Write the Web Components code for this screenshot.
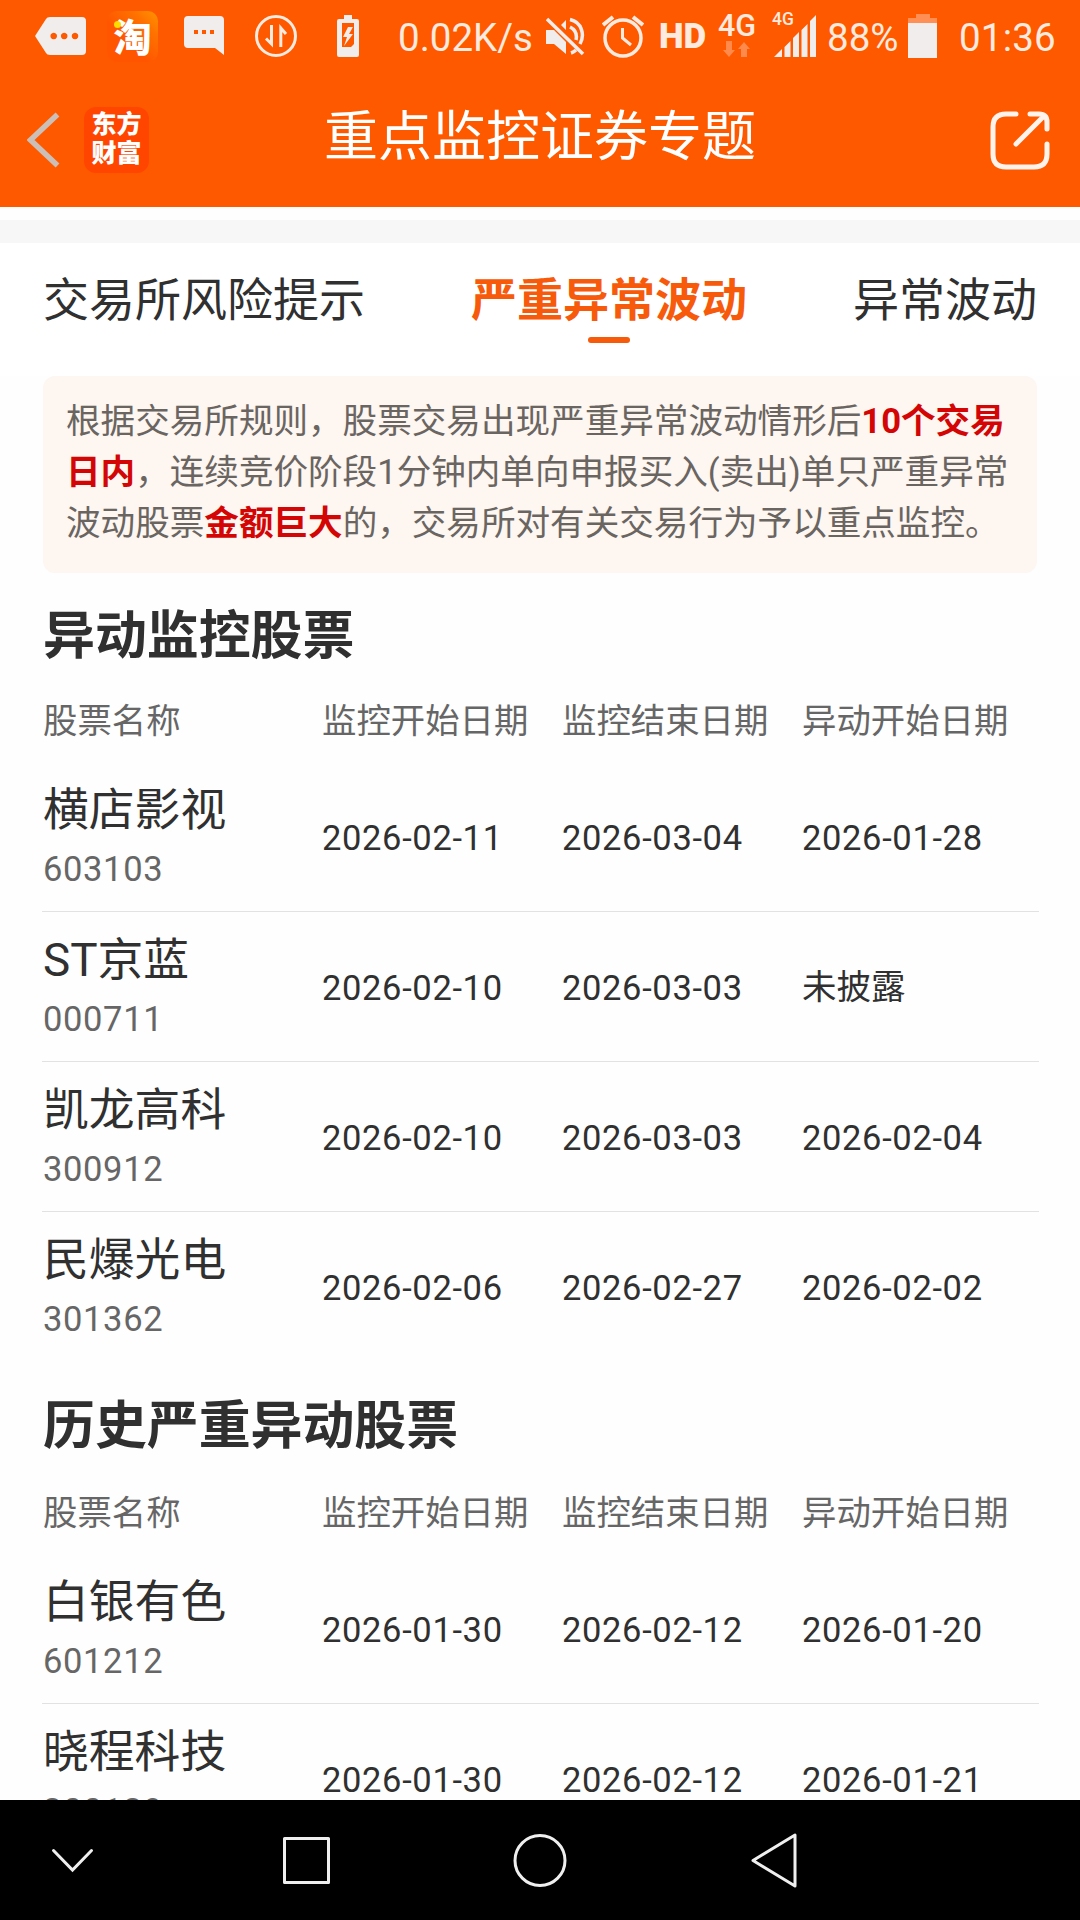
<!DOCTYPE html>
<html lang="zh-CN">
<head>
<meta charset="UTF-8">
<title>重点监控证券专题</title>
<style>
    html, body {
        margin: 0;
        height: 100%;
        background: #fefefe;
        font-family: Roboto, "Noto Sans CJK SC", sans-serif;
        color: #303030;
    }
</style>
</head>
<body>
<monitor-app></monitor-app>

<script>
// Base class: renders template() into an open shadow root
class BaseElement extends HTMLElement {
    connectedCallback() {
        if (!this.shadowRoot) {
            this.attachShadow({ mode: 'open' });
        }
        this.shadowRoot.innerHTML = this.template();
    }
}

// Component: StatusBar
class StatusBar extends BaseElement {
    template() {
        return `
            <style>
                :host {
                    display: flex;
                    height: 72px;
                    box-sizing: border-box;
                    padding: 0 0 0 35px;
                    color: #ffeadf;
                    font-size: 38.5px;
                    line-height: 75px;
                    white-space: nowrap;
                }
                svg, span, .tao, .net { flex: none; }
                svg { display: block; fill: #f1edec; }
                .tao {
                    width: 51px;
                    height: 51px;
                    margin: 11px 0 0 21px;
                    border-radius: 10px;
                    background: linear-gradient(225deg, #ff9500 0%, #ff7200 25%, #ff5500 60%);
                    color: #fff;
                    font-size: 38px;
                    font-weight: 900;
                    line-height: 54px;
                    text-align: center;
                    position: relative;
                }
                .tao::after {
                    content: "";
                    position: absolute;
                    left: 7px;
                    top: 10px;
                    width: 7px;
                    height: 7px;
                    border-radius: 50%;
                    background: #ffdc00;
                }
                .speed { width: 149px; margin-left: 39px; }
                .hd { width: 43px; margin-left: 15px; font-size: 35px; font-weight: 900; line-height: 74px; }
                .net {
                    display: flex;
                    flex-direction: column;
                    width: 40px;
                    margin-left: 16px;
                    font-size: 30.5px;
                    font-weight: 500;
                    line-height: 30px;
                    padding-top: 11px;
                    box-sizing: border-box;
                }
                .net svg { margin-left: 3px; fill: #ff8a4c; }
                .signal { position: relative; width: 45px; margin-left: 14px; height: 72px; }
                .signal svg { margin: 15px 0 0 2px; }
                .signal small {
                    position: absolute;
                    left: 0;
                    top: 9px;
                    font-size: 17.5px;
                    font-weight: 500;
                    line-height: 20px;
                }
                .percent { width: 72px; margin-left: 10px; }
                .time { margin-left: 22px; letter-spacing: 0.2px; }
            </style>
            <svg width="51" height="72" viewBox="0 0 51 72">
                <path fill-rule="evenodd" d="M0 36 11 19q1-2 4-2H47q4 0 4 4V51q0 4-4 4H15q-3 0-4-2ZM18.7 32.700a3.300 3.300 0 1 0 .01 0ZM29.200 32.700a3.300 3.300 0 1 0 .01 0ZM40 32.700a3.300 3.300 0 1 0 .01 0Z"/>
            </svg>
            <div class="tao">淘</div>
            <svg style="margin-left:26px" width="40" height="72" viewBox="0 0 40 72">
                <path fill-rule="evenodd" d="M4 16H36q4 0 4 4V55L31 48H4q-4 0-4-4V20q0-4 4-4ZM10 30v4h4v-4ZM18 30v4h4v-4ZM26 30v4h4v-4Z"/>
            </svg>
            <svg style="margin-left:31px;fill:none" width="42" height="72" viewBox="0 0 42 72" stroke="#ffeadf" stroke-width="3">
                <circle cx="21" cy="36" r="19.500"/>
                <path d="M16.500 25V44L11 38.500M25.800 47V28L31 34"/>
            </svg>
            <svg style="margin-left:40px" width="22" height="72" viewBox="0 0 22 72">
                <path fill-rule="evenodd" d="M7 15h8v4h5q2 0 2 2V55q0 2-2 2H2q-2 0-2-2V21q0-2 2-2h5ZM5 23V47h9l3-3V23Z"/>
                <path d="m11 27-5 10h4l-3 9 9-12h-4l4-7Z"/>
            </svg>
            <span class="speed">0.02K/s</span>
            <svg width="39" height="72" viewBox="0 0 39 72" style="margin-left:-1px">
                <path d="M0 30H8L20 42V54L8 44H0ZM15 25l5-5v10Z"/>
                <path fill="none" stroke="#f1edec" stroke-width="3.500" d="M1 19 37 54M24 19.500C36 22 39 35 34 44M24 27q8 4 6 13M25 53q3-1 5-3"/>
            </svg>
            <svg width="42" height="72" viewBox="0 0 42 72" style="margin-left:17px;fill:none" stroke="#ffeadf">
                <circle cx="21" cy="38" r="18" stroke-width="3.500"/>
                <path d="M20.500 28V38L29 45" stroke-width="3"/>
                <path d="M1 25 11 17M31 17 41 25" stroke-width="4"/>
            </svg>
            <span class="hd">HD</span>
            <div class="net">4G
                <svg width="38" height="16" viewBox="0 0 38 16">
                    <path d="M5 0h6v9h3l-6 7-6-7h3ZM20 16h6V8h3l-6-7-6 7h3Z"/>
                </svg>
            </div>
            <div class="signal">
                <svg width="43" height="42" viewBox="0 0 43 42">
                    <path d="M0 42 8 34V42ZM10.500 42V32l6-6V42ZM19 42V23l6-6V42ZM27.500 42V15l6-6V42ZM36 42V6l6-6V42Z"/>
                </svg>
                <small>4G</small>
            </div>
            <span class="percent">88%</span>
            <svg style="margin-left:9px" width="29" height="72" viewBox="0 0 29 72">
                <path fill="#ff8f55" d="M8 14H22v4h7v5H0v-5h8Z"/>
                <path d="M0 23H29V58H0Z"/>
            </svg>
            <span class="time">01:36</span>
        `;
    }
}

// Component: TitleBar
class TitleBar extends BaseElement {
    template() {
        return `
            <style>
                :host {
                    display: flex;
                    align-items: center;
                    height: 135px;
                    padding: 0 27px;
                    box-sizing: border-box;
                    color: #fff;
                }
                .side { flex: 1; display: flex; align-items: center; }
                .side.right { justify-content: flex-end; }
                h1 {
                    margin: 0;
                    font-size: 54px;
                    font-weight: 400;
                    line-height: 64px;
                    padding-bottom: 3px;
                }
                svg { display: block; fill: none; }
                .logo {
                    width: 65px;
                    height: 66px;
                    margin-left: 24px;
                    box-sizing: border-box;
                    padding-top: 3px;
                    border-radius: 12px;
                    background: #ff4500;
                    font-size: 25px;
                    font-weight: 900;
                    line-height: 29px;
                    text-align: center;
                }
            </style>
            <div class="side">
                <svg width="33" height="56" viewBox="0 0 33 56" stroke="#cbbfb7" stroke-width="5.500">
                    <path d="M30.500 2.500 3.500 28 30.500 53.500"/>
                </svg>
                <div class="logo">东方<br>财富</div>
            </div>
            <h1><slot></slot></h1>
            <div class="side right">
                <svg width="64" height="60" viewBox="0 0 64 60" stroke="#fff3ec" stroke-width="5" stroke-linecap="round" stroke-linejoin="round">
                    <path d="M27 4H17Q4 4 4 17V44Q4 57 17 57H45Q58 57 58 44V34M41 4H50Q58 4 58 12V19M27 34 55 6"/>
                </svg>
            </div>
        `;
    }
}

// Component: TabItem
class TabItem extends BaseElement {
    template() {
        return `
            <style>
                :host {
                    display: flex;
                    flex-direction: column;
                    align-items: center;
                    font-size: 46px;
                    line-height: 60px;
                    white-space: nowrap;
                }
                :host([active]) { color: #f65a0a; font-weight: 700; }
                i { display: none; width: 42px; height: 6px; margin-top: 7px; border-radius: 3px; background: #f65a0a; }
                :host([active]) i { display: block; }
            </style>
            <slot></slot><i></i>
        `;
    }
}

// Component: TabBar
class TabBar extends BaseElement {
    template() {
        return `
            <style>
                :host {
                    display: flex;
                    justify-content: space-between;
                    height: 133px;
                    padding: 27px 43px 0 43px;
                    box-sizing: border-box;
                    background: #fff;
                }
            </style>
            <slot></slot>
        `;
    }
}

// Component: NoticeBox
class NoticeBox extends BaseElement {
    template() {
        return `
            <style>
                :host {
                    display: block;
                    height: 197px;
                    margin: 0 43px;
                    padding: 20px 0 0 23px;
                    box-sizing: border-box;
                    border-radius: 12px;
                    background: #fdf6f1;
                    color: #6a6561;
                    font-size: 34.6px;
                    line-height: 51px;
                    white-space: nowrap;
                }
                ::slotted(b) { color: #d30505; }
            </style>
            <slot></slot>
        `;
    }
}

// Component: StockRow
class StockRow extends BaseElement {
    template() {
        const dates = this.getAttribute('dates').split(',');
        return `
            <style>
                :host {
                    display: grid;
                    grid-template-columns: 279px 240px 240px 1fr;
                    align-items: center;
                    height: 150px;
                    padding-left: 1px;
                    box-sizing: border-box;
                    border-bottom: 1px solid #e2e2e2;
                    font-size: 34.5px;
                    letter-spacing: 0.65px;
                }
                :host(:last-of-type) { border-bottom-color: transparent; }
                .name { font-size: 45.8px; line-height: 60px; letter-spacing: 0; }
                .code { color: #666; line-height: 56px; }
                .date { padding-top: 2px; line-height: 44px; }
                .date.text { letter-spacing: 0; padding-top: 0; }
                .stock { padding-top: 4px; }
            </style>
            <div class="stock">
                <div class="name"><slot></slot></div>
                <div class="code">${this.getAttribute('code')}</div>
            </div>
            ${dates.map(date => `<div class="date${/\d/.test(date) ? '' : ' text'}">${date}</div>`).join('')}
        `;
    }
}

// Component: StockTable
class StockTable extends BaseElement {
    template() {
        return `
            <style>
                :host { display: block; margin: 0 41px 0 42px; }
                h2 {
                    margin: 0;
                    padding-left: 1px;
                    font-size: 51.9px;
                    line-height: 70px;
                }
                .head {
                    display: grid;
                    grid-template-columns: 279px 240px 240px 1fr;
                    padding: var(--head-gap, 27px) 0 19px 1px;
                    color: #666;
                    font-size: 34.4px;
                    line-height: 44px;
                    white-space: nowrap;
                }
            </style>
            <h2>${this.getAttribute('heading')}</h2>
            <div class="head">
                <span>股票名称</span>
                <span>监控开始日期</span>
                <span>监控结束日期</span>
                <span>异动开始日期</span>
            </div>
            <slot></slot>
        `;
    }
}

// Component: NavBar
class NavBar extends BaseElement {
    template() {
        return `
            <style>
                :host { display: flex; align-items: center; height: 120px; background: #000; }
                svg { fill: none; stroke: #efefef; stroke-width: 3; stroke-linejoin: round; stroke-linecap: round; }
                svg + svg { margin-left: 183px; }
            </style>
            <svg style="margin-left:47px" width="50" height="60" viewBox="0 0 50 60"><path stroke-linejoin="miter" d="M6.500 20.500 25.500 40 44.500 20.500"/></svg>
            <svg width="54" height="60" viewBox="0 0 54 60"><rect x="4.500" y="8.500" width="44" height="44"/></svg>
            <svg style="margin-left:176px" width="60" height="60" viewBox="0 0 60 60"><circle cx="30" cy="30.500" r="25"/></svg>
            <svg style="margin-left:177px" width="56" height="60" viewBox="0 0 56 60"><path d="M6 30.500 48 5V56Z"/></svg>
        `;
    }
}

// Component: MonitorApp
class MonitorApp extends BaseElement {
    template() {
        return `
            <style>
                :host { display: flex; flex-direction: column; height: 1920px; overflow: hidden; }
                header { flex: none; height: 207px; background: #ff5900; }
                .strip { height: 23px; margin-top: 13px; background: #f7f7f7; }
                main { flex: 1; min-height: 0; overflow: hidden; }
                nav-bar { flex: none; }
                .current { margin-top: 29px; }
                .history { margin-top: 30px; --head-gap: 29px; }
            </style>
            <header>
                <status-bar></status-bar>
                <title-bar>重点监控证券专题</title-bar>
            </header>
            <main>
                <div class="strip"></div>
                <tab-bar>
                    <tab-item>交易所风险提示</tab-item>
                    <tab-item active>严重异常波动</tab-item>
                    <tab-item>异常波动</tab-item>
                </tab-bar>
                <notice-box>根据交易所规则，股票交易出现严重异常波动情形后<b>10个交易</b><br><b>日内</b>，连续竞价阶段1分钟内单向申报买入(卖出)单只严重异常<br>波动股票<b>金额巨大</b>的，交易所对有关交易行为予以重点监控。</notice-box>
                <stock-table class="current" heading="异动监控股票">
                    <stock-row code="603103" dates="2026-02-11,2026-03-04,2026-01-28">横店影视</stock-row>
                    <stock-row code="000711" dates="2026-02-10,2026-03-03,未披露">ST京蓝</stock-row>
                    <stock-row code="300912" dates="2026-02-10,2026-03-03,2026-02-04">凯龙高科</stock-row>
                    <stock-row code="301362" dates="2026-02-06,2026-02-27,2026-02-02">民爆光电</stock-row>
                </stock-table>
                <stock-table class="history" heading="历史严重异动股票">
                    <stock-row code="601212" dates="2026-01-30,2026-02-12,2026-01-20">白银有色</stock-row>
                    <stock-row code="300139" dates="2026-01-30,2026-02-12,2026-01-21">晓程科技</stock-row>
                </stock-table>
            </main>
            <nav-bar></nav-bar>
        `;
    }
}

customElements.define('status-bar', StatusBar);
customElements.define('title-bar', TitleBar);
customElements.define('tab-item', TabItem);
customElements.define('tab-bar', TabBar);
customElements.define('notice-box', NoticeBox);
customElements.define('stock-row', StockRow);
customElements.define('stock-table', StockTable);
customElements.define('nav-bar', NavBar);
customElements.define('monitor-app', MonitorApp);
</script>
</body>
</html>
